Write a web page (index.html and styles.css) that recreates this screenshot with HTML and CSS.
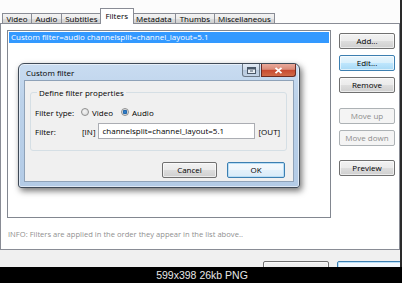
FILE: index.html
```html
<!DOCTYPE html>
<html>
<head>
<meta charset="utf-8">
<link rel="stylesheet" href="styles.css">
</head>
<body>
<div class="shot">
  <div class="win">
    <div class="tabs">
      <div class="tab">Video</div>
      <div class="tab">Audio</div>
      <div class="tab">Subtitles</div>
      <div class="tab active">Filters</div>
      <div class="tab">Metadata</div>
      <div class="tab">Thumbs</div>
      <div class="tab">Miscellaneous</div>
    </div>
    <div class="panel">
      <div class="row">
        <div class="list">
          <div class="item sel">Custom filter=audio channelsplit=channel_layout=5.1</div>
        </div>
        <div class="side">
          <div class="btn">Add...</div>
          <div class="btn focus">Edit...</div>
          <div class="btn">Remove</div>
          <div class="btn dis gap1">Move up</div>
          <div class="btn dis">Move down</div>
          <div class="btn gap2">Preview</div>
        </div>
      </div>
      <div class="info">INFO: Filters are applied in the order they appear in the list above..</div>
    </div>
    <div class="foot">
      <div class="btn wide">Cancel</div>
      <div class="btn wide def">OK</div>
    </div>
  </div>

  <div class="dlg">
    <div class="titlebar">
      <span class="title">Custom filter</span>
      <div class="tbtns">
        <div class="tb help">
          <svg width="9" height="7" viewBox="0 0 9 7"><rect x="0.5" y="0.5" width="8" height="6" fill="#e8edf3" stroke="#4a5868"/><rect x="1" y="1" width="7" height="1.5" fill="#4a5868"/><path d="M3 4h3" stroke="#4a5868"/></svg>
        </div>
        <div class="tb close">
          <svg width="9" height="7" viewBox="0 0 9 7"><path d="M1.5 0.8L7.5 6.2M7.5 0.8L1.5 6.2" stroke="#fff" stroke-width="1.8"/></svg>
        </div>
      </div>
    </div>
    <div class="client">
      <fieldset class="group">
        <legend>Define filter properties</legend>
        <div class="frow">
          <span class="flabel">Filter type:</span>
          <span class="radio"></span><span class="rtext">Video</span>
          <span class="radio on"></span><span class="rtext">Audio</span>
        </div>
        <div class="frow">
          <span class="flabel">Filter:</span>
          <span class="tag">[IN]</span>
          <div class="input">channelsplit=channel_layout=5.1</div>
          <span class="tag">[OUT]</span>
        </div>
      </fieldset>
      <div class="dbtns">
        <div class="btn dw1">Cancel</div>
        <div class="btn dw2 def">OK</div>
      </div>
    </div>
  </div>
</div>
<div class="bar">599x398 26kb PNG</div>
</body>
</html>
```

FILE: styles.css
```css
* { box-sizing: border-box; }
html, body { margin: 0; padding: 0; }
body {
  width: 402px;
  height: 283px;
  overflow: hidden;
  background: #000;
  font-family: "Open Sans", "Noto Sans", sans-serif;
  font-size: 8px;
  color: #000;
}
.shot {
  position: relative;
  height: 267px;
  overflow: hidden;
  background: #fcfcfc;
  border-right: 2px solid #2a2a2a;
}
.win { display: flex; flex-direction: column; height: 100%; }

.tabs {
  flex: none;
  display: flex;
  align-items: flex-end;
  height: 23px;
  padding-left: 2px;
  position: relative;
  z-index: 2;
}
.tab {
  height: 10px;
  line-height: 9px;
  padding: 0 3.5px;
  border: 1px solid #898c95;
  border-bottom: none;
  margin-right: -1px;
  background: linear-gradient(#f3f3f3, #ebebeb 50%, #dddddd 51%, #cfcfcf);
  white-space: nowrap;
}
.tab.active {
  height: 16px;
  margin-bottom: -1px;
  line-height: 14px;
  background: #fff;
  padding: 0 4.5px;
  position: relative;
  z-index: 3;
  margin-left: -1px;
  margin-right: -2px;
}
.panel {
  flex: none;
  height: 227px;
  background: #fff;
  border: 1px solid #898c95;
  padding: 6px 0 0 6px;
}
.row { display: flex; }
.list {
  width: 324px;
  height: 188px;
  border: 1px solid #828790;
  padding: 1px;
  background: #fff;
}
.item {
  height: 11px;
  line-height: 10px;
  padding-left: 2px;
  white-space: nowrap;
}
.item.sel { background: #3399ff; color: #fff; }
.side {
  margin-left: 8px;
  width: 56px;
  padding-top: 3px;
  display: flex;
  flex-direction: column;
  gap: 6px;
}
.btn {
  height: 16px;
  border: 1px solid #707070;
  border-radius: 2px;
  background: linear-gradient(#f2f2f2, #ebebeb 48%, #dddddd 52%, #cfcfcf);
  box-shadow: inset 0 0 0 1px rgba(255,255,255,.6);
  text-align: center;
  line-height: 14px;
  white-space: nowrap;
}
.btn.focus {
  border-color: #3c7fb1;
  background: linear-gradient(#eaf6fd, #d9f0fc 48%, #bee6fd 52%, #a7d9f5);
}
.btn.dis {
  border-color: #adb2b5;
  background: #f4f4f4;
  color: #8d8d8d;
  box-shadow: none;
}
.btn.def {
  border-color: #3c7fb1;
  box-shadow: inset 0 0 0 1px #b9def6;
  background: linear-gradient(#f4f9fd, #eef6fc 48%, #e3f1fb 52%, #d8ebf8);
}
.btn.gap1 { margin-top: 9px; }
.btn.gap2 { margin-top: 8px; }
.info {
  margin-top: 11px;
  padding-left: 1px;
  color: #8f8f8f;
  font-size: 7.6px;
  line-height: 11px;
  white-space: nowrap;
}
.foot {
  flex: none;
  height: 30px;
  background: #f0f0f0;
  display: flex;
  align-items: flex-start;
  gap: 8px;
  padding: 11px 0 0 263px;
}
.btn.wide { width: 66px; height: 17px; flex: none; line-height: 15px; }

/* dialog */
.dlg {
  position: absolute;
  left: 18px;
  top: 63px;
  width: 282px;
  height: 125px;
  border: 1px solid #3f4a57;
  border-radius: 6px 6px 3px 3px;
  background: linear-gradient(#c9dcf1, #bcd2ea 30%, #b3cbe6);
  box-shadow: 2px 3px 6px rgba(0,0,0,.55), inset 0 0 0 1px rgba(255,255,255,.55);
  display: flex;
  flex-direction: column;
  padding: 0 5px 5px 5px;
  z-index: 5;
}
.titlebar {
  height: 16px;
  display: flex;
  align-items: flex-start;
}
.title { padding-left: 2px; line-height: 17px; }
.tbtns { margin-left: auto; margin-right: -2px; display: flex; gap: 1px; }
.tb {
  height: 13px;
  border: 1px solid #6b7785;
  border-top: none;
  display: flex;
  align-items: center;
  justify-content: center;
}
.tb.help {
  width: 18px;
  border-radius: 0 0 0 3px;
  background: linear-gradient(#e3ebf4, #cbd8e7 50%, #b6c7db 51%, #c3d3e6);
}
.tb.close {
  width: 35px;
  border-color: #6c2b22;
  border-radius: 0 0 3px 0;
  background: linear-gradient(#e9a99b, #d98a78 45%, #c7482f 50%, #d16b48);
}
.client {
  flex: 1;
  background: #f0f0f0;
  border: 1px solid #8fa2b8;
  padding: 6px 6px 0 5px;
}
.group {
  margin: 0;
  border: 1px solid #d5dfe5;
  border-radius: 3px;
  padding: 6px 4px 5px 4px;
  height: 64px;
}
.group legend {
  padding: 0 2px;
  margin-left: 2px;
  line-height: 11px;
}
.frow {
  display: flex;
  align-items: center;
  height: 16px;
  margin-bottom: 3px;
}
.flabel { width: 46px; }
.radio {
  width: 8px;
  height: 8px;
  border-radius: 50%;
  border: 1px solid #8e8f8f;
  background: radial-gradient(circle at 40% 40%, #f4f4f4, #d6d6d6);
  margin-right: 3px;
}
.radio.on {
  background: radial-gradient(circle, #3a8ad6 0, #1c61a6 2px, #e6e6e6 2.6px, #cfcfcf);
  margin-left: 8px;
}
.tag { padding: 0 2px 0 1px; }
.input {
  width: 157px;
  height: 16px;
  border: 1px solid #abadb3;
  background: #fff;
  line-height: 14px;
  padding-left: 4px;
  margin-right: 3px;
}
.dbtns {
  display: flex;
  justify-content: flex-end;
  gap: 10px;
  margin-top: 11px;
  padding-right: 2px;
}
.dw1 { width: 55px; }
.dw2 { width: 58px; }

.bar {
  height: 16px;
  background: #000;
  color: #e6e6e6;
  font-family: "Liberation Sans", Arial, sans-serif;
  font-size: 10.5px;
  line-height: 16px;
  text-align: center;
  padding-left: 2px;
}
```
